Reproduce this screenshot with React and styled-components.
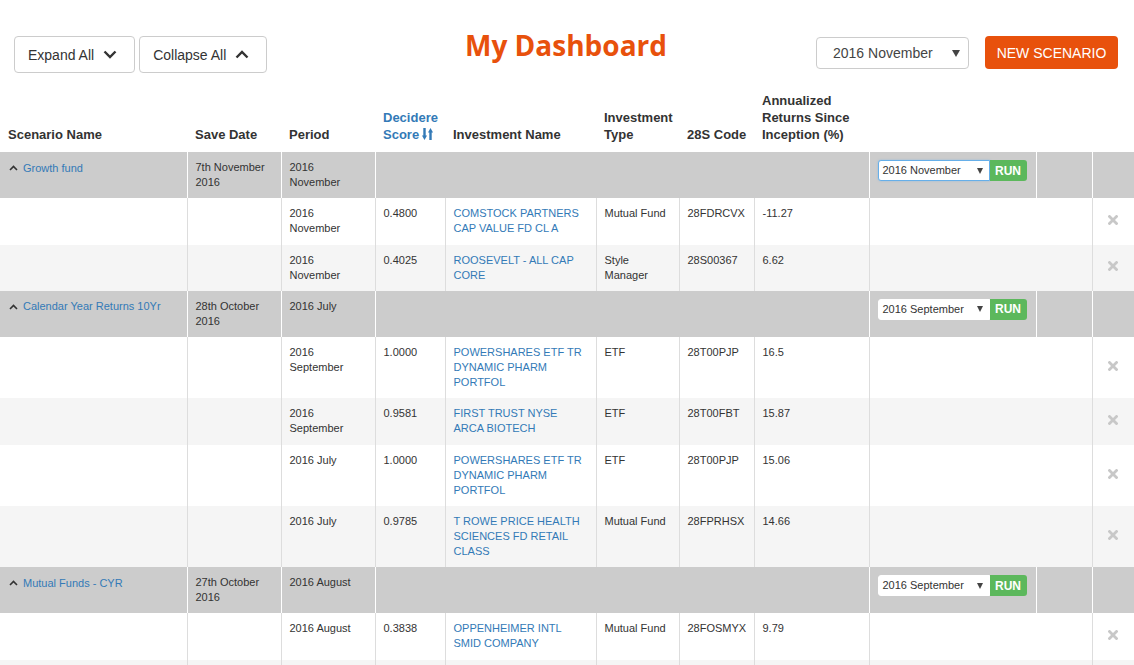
import React from "react"
import styled, { createGlobalStyle } from "styled-components"

const ORANGE = "#e8510c"
const BLUE = "#337ab7"

const GlobalStyle = createGlobalStyle`
  body {
    margin: 0;
    font-family: "Liberation Sans", Arial, sans-serif;
    color: #333;
    background: #fff;
  }
`

const Page = styled.div`
  width: 1134px;
`

const Toolbar = styled.div`
  display: grid;
  grid-template-columns: 1fr auto 1fr;
  align-items: start;
  height: 84px;
  padding: 36px 16px 0 14px;
  box-sizing: border-box;
`

const ButtonGroup = styled.div`
  display: flex;
  gap: 4px;
`

const ToggleButton = styled.button`
  display: flex;
  align-items: center;
  justify-content: space-between;
  gap: 9px;
  height: 37px;
  padding: 0 17px 0 13px;
  border: 1px solid #ccc;
  border-radius: 4px;
  background: #fff;
  font-family: "Liberation Sans", Arial, sans-serif;
  font-size: 14px;
  color: #333;
  cursor: pointer;
`

const Title = styled.h1`
  margin: -10px 0 0;
  font-family: "Open Sans", sans-serif;
  font-weight: 700;
  font-size: 28px;
  line-height: 38px;
  color: ${ORANGE};
`

const RightGroup = styled.div`
  justify-self: end;
  display: flex;
  align-items: flex-start;
  gap: 16px;
`

const TopSelect = styled.div`
  display: flex;
  align-items: center;
  justify-content: space-between;
  width: 153px;
  height: 32px;
  margin-top: 1px;
  padding: 0 8px 0 16px;
  box-sizing: border-box;
  border: 1px solid #ccc;
  border-radius: 4px;
  font-size: 14px;
  color: #444;
`

const Caret = styled.span`
  width: 0;
  height: 0;
  border-left: ${(p) => (p.$small ? 3.5 : 4)}px solid transparent;
  border-right: ${(p) => (p.$small ? 3.5 : 4)}px solid transparent;
  border-top: ${(p) => (p.$small ? 6 : 7)}px solid #444;
`

const NewButton = styled.button`
  width: 133px;
  height: 33px;
  padding: 0;
  border: none;
  border-radius: 4px;
  background: ${ORANGE};
  color: #fff;
  font-family: "Liberation Sans", Arial, sans-serif;
  font-size: 14px;
  cursor: pointer;
`

const Table = styled.table`
  width: 1134px;
  table-layout: fixed;
  border-collapse: collapse;
  font-size: 11px;
  line-height: 15px;
`

const Th = styled.th`
  padding: 8px 8px 9px;
  text-align: left;
  vertical-align: bottom;
  font-size: 13px;
  line-height: 17px;
  font-weight: 700;
  color: #333;
  white-space: ${(p) => (p.$nowrap ? "nowrap" : "normal")};
`

const SortLink = styled.span`
  color: ${BLUE};
`

const GroupRow = styled.tr`
  background: #ccc;
`

const ItemRow = styled.tr`
  background: ${(p) => (p.$striped ? "#f5f5f5" : "#fff")};
`

const Td = styled.td`
  padding: 8px 8px 8.25px;
  vertical-align: ${(p) => (p.$middle ? "middle" : "top")};
  text-align: ${(p) => (p.$center ? "center" : "left")};
  &:not(:last-child) {
    border-right: 1px solid ${(p) => (p.$group ? "#fff" : "#ddd")};
  }
`

const Link = styled.a`
  color: ${BLUE};
  text-decoration: none;
`

const ScenarioLink = styled(Link)`
  display: inline-flex;
  align-items: center;
  gap: 5px;
  margin-left: 1px;
`

const RunForm = styled.div`
  display: flex;
  width: 149px;
  height: 21px;
`

const RowSelect = styled.div`
  display: flex;
  align-items: center;
  justify-content: space-between;
  flex: 1;
  padding: 0 6px 0 4px;
  background: #fff;
  border: 1px solid ${(p) => (p.$focus ? "#66afe9" : "#fff")};
  border-radius: 3px 0 0 3px;
  box-shadow: ${(p) => (p.$focus ? "0 0 2px rgba(102,175,233,.6)" : "none")};
  font-size: 11px;
  color: #333;
`

const RunButton = styled.button`
  width: 37px;
  padding: 0;
  border: none;
  border-radius: 0 3px 3px 0;
  background: #5cb85c;
  color: #fff;
  font-family: "Liberation Sans", Arial, sans-serif;
  font-weight: 700;
  font-size: 12px;
`

const ChevronDown = () => (
  <svg width="14" height="9" viewBox="0 0 14 9">
    <polyline points="1.5,1.5 7,7 12.5,1.5" fill="none" stroke="#333" strokeWidth="2.4" />
  </svg>
)

const ChevronUp = () => (
  <svg width="14" height="9" viewBox="0 0 14 9">
    <polyline points="1.5,7.5 7,2 12.5,7.5" fill="none" stroke="#333" strokeWidth="2.4" />
  </svg>
)

const SmallChevronUp = () => (
  <svg width="9" height="6" viewBox="0 0 9 6">
    <polyline points="1,5 4.5,1.5 8,5" fill="none" stroke="#333" strokeWidth="1.6" />
  </svg>
)

const SortIcon = () => (
  <svg width="11" height="12" viewBox="0 0 11 12" style={{ marginLeft: 3, verticalAlign: -1 }}>
    <rect x="1.3" y="0" width="2.4" height="8" fill={BLUE} />
    <polygon points="0,7.5 5,7.5 2.5,12" fill={BLUE} />
    <rect x="7.3" y="4" width="2.4" height="8" fill={BLUE} />
    <polygon points="6,4.5 11,4.5 8.5,0" fill={BLUE} />
  </svg>
)

const RemoveIcon = () => (
  <svg width="10" height="10" viewBox="0 0 10 10">
    <path d="M1.5 1.5 L8.5 8.5 M8.5 1.5 L1.5 8.5" stroke="#c8c8c8" strokeWidth="2.8" strokeLinecap="square" />
  </svg>
)

const scenarios = [
  {
    name: "Growth fund",
    saved: "7th November 2016",
    period: "2016 November",
    runPeriod: "2016 November",
    focus: true,
    items: [
      ["2016 November", "0.4800", "COMSTOCK PARTNERS CAP VALUE FD CL A", "Mutual Fund", "28FDRCVX", "-11.27"],
      ["2016 November", "0.4025", "ROOSEVELT - ALL CAP CORE", "Style Manager", "28S00367", "6.62"],
    ],
  },
  {
    name: "Calendar Year Returns 10Yr",
    saved: "28th October 2016",
    period: "2016 July",
    runPeriod: "2016 September",
    items: [
      ["2016 September", "1.0000", "POWERSHARES ETF TR DYNAMIC PHARM PORTFOL", "ETF", "28T00PJP", "16.5"],
      ["2016 September", "0.9581", "FIRST TRUST NYSE ARCA BIOTECH", "ETF", "28T00FBT", "15.87"],
      ["2016 July", "1.0000", "POWERSHARES ETF TR DYNAMIC PHARM PORTFOL", "ETF", "28T00PJP", "15.06"],
      ["2016 July", "0.9785", "T ROWE PRICE HEALTH SCIENCES FD RETAIL CLASS", "Mutual Fund", "28FPRHSX", "14.66"],
    ],
  },
  {
    name: "Mutual Funds - CYR",
    saved: "27th October 2016",
    period: "2016 August",
    runPeriod: "2016 September",
    items: [
      ["2016 August", "0.3838", "OPPENHEIMER INTL SMID COMPANY", "Mutual Fund", "28FOSMYX", "9.79"],
      ["2016 August", "0.3511", "OPPENHEIMER GLOBAL OPPORTUNITIES", "Mutual Fund", "28FOGOYX", "8.95"],
    ],
  },
]

const widths = [187, 94, 94, 70, 151, 83, 75, 115, 167, 56, 42]

const ScenarioGroup = ({ scenario }) => (
  <>
    <GroupRow>
      <Td $group>
        <ScenarioLink href="#">
          <SmallChevronUp />
          {scenario.name}
        </ScenarioLink>
      </Td>
      <Td $group>{scenario.saved}</Td>
      <Td $group>{scenario.period}</Td>
      <Td $group colSpan={5} />
      <Td $group>
        <RunForm>
          <RowSelect $focus={scenario.focus}>
            {scenario.runPeriod}
            <Caret $small />
          </RowSelect>
          <RunButton>RUN</RunButton>
        </RunForm>
      </Td>
      <Td $group />
      <Td $group />
    </GroupRow>
    {scenario.items.map((item, i) => (
      <ItemRow key={i} $striped={i % 2 === 1}>
        <Td />
        <Td />
        <Td>{item[0]}</Td>
        <Td>{item[1]}</Td>
        <Td>
          <Link href="#">{item[2]}</Link>
        </Td>
        <Td>{item[3]}</Td>
        <Td>{item[4]}</Td>
        <Td>{item[5]}</Td>
        <Td colSpan={2} />
        <Td $middle $center>
          <RemoveIcon />
        </Td>
      </ItemRow>
    ))}
  </>
)

export default function App() {
  return (
    <Page>
      <GlobalStyle />
      <Toolbar>
        <ButtonGroup>
          <ToggleButton>
            Expand All <ChevronDown />
          </ToggleButton>
          <ToggleButton>
            Collapse All <ChevronUp />
          </ToggleButton>
        </ButtonGroup>
        <Title>My Dashboard</Title>
        <RightGroup>
          <TopSelect>
            2016 November
            <Caret />
          </TopSelect>
          <NewButton>NEW SCENARIO</NewButton>
        </RightGroup>
      </Toolbar>
      <Table>
        <colgroup>
          {widths.map((w, i) => (
            <col key={i} style={{ width: w }} />
          ))}
        </colgroup>
        <thead>
          <tr>
            <Th>Scenario Name</Th>
            <Th>Save Date</Th>
            <Th>Period</Th>
            <Th>
              <SortLink>
                Decidere Score
                <SortIcon />
              </SortLink>
            </Th>
            <Th>Investment Name</Th>
            <Th>Investment Type</Th>
            <Th $nowrap>28S Code</Th>
            <Th>Annualized Returns Since Inception (%)</Th>
            <Th />
            <Th />
            <Th />
          </tr>
        </thead>
        <tbody>
          {scenarios.map((s) => (
            <ScenarioGroup key={s.name} scenario={s} />
          ))}
        </tbody>
      </Table>
    </Page>
  )
}
